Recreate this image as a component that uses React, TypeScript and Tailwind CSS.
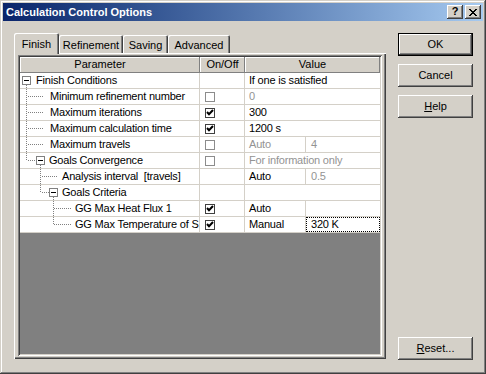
import React from "react";

const RAISED =
  "shadow-[inset_-1px_-1px_#404040,inset_1px_1px_#ffffff,inset_-2px_-2px_#808080,inset_2px_2px_#d4d0c8]";

type Guide = {
  w: number;
  v: [number, number, number][];
  h: [number, number, number][];
  box?: [number, number];
};

type RowT = {
  label: string;
  guide: Guide;
  check: boolean | null;
  value: string;
  valueGray?: boolean;
  sub?: string;
  subGray?: boolean;
  focus?: boolean;
};

const rows: RowT[] = [
  {
    label: "Finish Conditions",
    guide: { w: 16, v: [[6, 12, 15]], h: [], box: [2, 3] },
    check: null,
    value: "If one is satisfied",
  },
  {
    label: "Minimum refinement number",
    guide: { w: 30, v: [[6, 0, 15]], h: [[7, 8, 22]] },
    check: false,
    value: "0",
    valueGray: true,
  },
  {
    label: "Maximum iterations",
    guide: { w: 30, v: [[6, 0, 15]], h: [[7, 8, 22]] },
    check: true,
    value: "300",
  },
  {
    label: "Maximum calculation time",
    guide: { w: 30, v: [[6, 0, 15]], h: [[7, 8, 22]] },
    check: true,
    value: "1200 s",
  },
  {
    label: "Maximum travels",
    guide: { w: 30, v: [[6, 0, 15]], h: [[7, 8, 22]] },
    check: false,
    value: "Auto",
    valueGray: true,
    sub: "4",
    subGray: true,
  },
  {
    label: "Goals Convergence",
    guide: {
      w: 29,
      v: [
        [6, 0, 7],
        [20, 12, 15],
      ],
      h: [[7, 8, 16]],
      box: [16, 3],
    },
    check: false,
    value: "For information only",
    valueGray: true,
  },
  {
    label: "Analysis interval  [travels]",
    guide: { w: 42, v: [[20, 0, 15]], h: [[7, 22, 36]] },
    check: null,
    value: "Auto",
    sub: "0.5",
    subGray: true,
  },
  {
    label: "Goals Criteria",
    guide: {
      w: 42,
      v: [
        [20, 0, 7],
        [33, 12, 15],
      ],
      h: [[7, 22, 29]],
      box: [29, 3],
    },
    check: null,
    value: "",
  },
  {
    label: "GG Max Heat Flux 1",
    guide: { w: 55, v: [[33, 0, 15]], h: [[7, 34, 50]] },
    check: true,
    value: "Auto",
    sub: "",
  },
  {
    label: "GG Max Temperature of S",
    guide: { w: 55, v: [[33, 0, 7]], h: [[7, 34, 50]] },
    check: true,
    value: "Manual",
    sub: "320 K",
    focus: true,
  },
];

function TreeGuide({ g }: { g: Guide }) {
  const els: React.ReactNode[] = [];
  g.v.forEach(([x, y1, y2], i) => {
    for (let y = y1; y <= y2; y++) {
      if (y % 2 === 0) els.push(<rect key={`v${i}-${y}`} x={x} y={y} width={1} height={1} fill="#808080" />);
    }
  });
  g.h.forEach(([y, x1, x2], i) => {
    for (let x = x1; x <= x2; x++) {
      if (x % 2 === 0) els.push(<rect key={`h${i}-${x}`} x={x} y={y} width={1} height={1} fill="#808080" />);
    }
  });
  if (g.box) {
    const [bx, by] = g.box;
    els.push(
      <rect key="box" x={bx + 0.5} y={by + 0.5} width={8} height={8} fill="#ffffff" stroke="#808080" strokeWidth={1} />
    );
    els.push(<rect key="minus" x={bx + 2} y={by + 4} width={5} height={1} fill="#000000" />);
  }
  return (
    <svg width={g.w} height={15} className="flex-none" shapeRendering="crispEdges">
      {els}
    </svg>
  );
}

function CheckBox({ checked }: { checked: boolean }) {
  return (
    <div
      className={`w-[10px] h-[10px] bg-white border flex items-center justify-center ${
        checked ? "border-[#404040]" : "border-[#8c8c8c]"
      }`}
    >
      {checked && (
        <svg width={8} height={8} viewBox="0 0 8 8">
          <path d="M1 3 L3 5.2 L7 1" fill="none" stroke="#000" strokeWidth={2} />
        </svg>
      )}
    </div>
  );
}

function DataRow({ r }: { r: RowT }) {
  const gray = "text-[#939393]";
  return (
    <div className="flex h-[16px] bg-white text-[11px] leading-[15px] tracking-[-0.2px]">
      <div className="w-[180px] flex-none flex items-start overflow-hidden border-b border-r border-[#d4d0c8] whitespace-pre">
        <TreeGuide g={r.guide} />
        <span className="text-black">{r.label}</span>
      </div>
      <div className="w-[45px] flex-none border-b border-r border-[#d4d0c8] flex items-center pl-[5px]">
        {r.check !== null && <CheckBox checked={r.check} />}
      </div>
      {r.sub === undefined ? (
        <div className={`flex-1 border-b border-[#d4d0c8] pl-[4px] ${r.valueGray ? gray : "text-black"}`}>{r.value}</div>
      ) : (
        <div className="flex-1 flex border-b border-[#d4d0c8]">
          <div className={`w-[61px] flex-none border-r border-[#d4d0c8] pl-[4px] ${r.valueGray ? gray : "text-black"}`}>
            {r.value}
          </div>
          {r.focus ? (
            <div className="flex-1 border border-dotted border-black pl-[4px] leading-[13px] text-black">{r.sub}</div>
          ) : (
            <div className={`flex-1 pl-[5px] ${r.subGray ? gray : "text-black"}`}>{r.sub}</div>
          )}
        </div>
      )}
    </div>
  );
}

function Btn({ children, def }: { children: React.ReactNode; def?: boolean }) {
  if (def) {
    return (
      <div className="w-[75px] h-[23px] border border-black bg-[#d4d0c8]">
        <div className="w-full h-full flex items-center justify-center shadow-[inset_-1px_-1px_#404040,inset_1px_1px_#ffffff,inset_-2px_-2px_#808080] text-[11px] text-black">
          {children}
        </div>
      </div>
    );
  }
  return (
    <div className={`w-[75px] h-[23px] bg-[#d4d0c8] flex items-center justify-center text-[11px] text-black ${RAISED}`}>
      {children}
    </div>
  );
}

function Tab({ label, w, sel }: { label: string; w: number; sel?: boolean }) {
  return (
    <div
      style={{ width: w }}
      className={
        sel
          ? "relative z-10 h-[21px] -mb-px bg-[#d4d0c8] rounded-t-[2px] flex justify-center pt-[3px] text-[11px] text-black shadow-[inset_1px_1px_#ffffff,inset_-1px_0_#404040,inset_-2px_0_#808080]"
          : "h-[18px] bg-[#d4d0c8] rounded-t-[2px] flex justify-center pt-[2px] text-[11px] text-black shadow-[inset_1px_1px_#ffffff,inset_-1px_0_#404040,inset_-2px_0_#808080]"
      }
    >
      {label}
    </div>
  );
}

export default function App() {
  return (
    <div className="w-[486px] h-[374px] bg-[#d4d0c8] p-[3px] flex flex-col font-['Liberation_Sans',Arial,sans-serif] shadow-[inset_-1px_-1px_#404040,inset_1px_1px_#d4d0c8,inset_-2px_-2px_#808080,inset_2px_2px_#ffffff]">
      {/* Title bar */}
      <div className="h-[18px] flex items-center bg-gradient-to-r from-[#0a246a] to-[#a6caf0] pl-[3px] pr-[2px]">
        <span className="text-white font-bold text-[11px] flex-1">Calculation Control Options</span>
        <div className={`w-[16px] h-[14px] bg-[#d4d0c8] flex items-center justify-center ${RAISED}`}>
          <span className="text-black font-bold text-[11px] leading-none -mt-px">?</span>
        </div>
        <div className={`w-[16px] h-[14px] ml-[2px] bg-[#d4d0c8] flex items-center justify-center ${RAISED}`}>
          <svg width={8} height={7} viewBox="0 0 8 7" shapeRendering="crispEdges">
            <path d="M0 0h2v1h-2zM6 0h2v1h-2zM1 1h2v1h-2zM5 1h2v1h-2zM2 2h4v1h-4zM3 3h2v1h-2zM2 4h4v1h-4zM1 5h2v1h-2zM5 5h2v1h-2zM0 6h2v1h-2zM6 6h2v1h-2z" fill="#000" />
          </svg>
        </div>
      </div>

      {/* Body */}
      <div className="flex flex-1 pl-[11px] pt-[12px]">
        <div className="w-[372px] flex flex-col">
          <div className="flex items-end h-[20px]">
            <Tab label="Finish" w={45} sel />
            <Tab label="Refinement" w={64} />
            <Tab label="Saving" w={45} />
            <Tab label="Advanced" w={62} />
          </div>
          <div className="h-[306px] flex flex-col pt-[2px] px-[4px] pb-[3px] shadow-[inset_1px_1px_#ffffff,inset_-1px_-1px_#404040,inset_-2px_-2px_#808080]">
            <div className="flex-1 flex flex-col p-[2px] shadow-[inset_1px_1px_#808080,inset_-1px_-1px_#ffffff,inset_2px_2px_#404040,inset_-2px_-2px_#d4d0c8]">
              {/* header */}
              <div className="flex h-[16px] text-[11px] text-black leading-[15px]">
                <div className="w-[180px] flex-none flex justify-center pr-[20px] bg-[#d4d0c8] shadow-[inset_-1px_-1px_#808080,inset_1px_1px_#ffffff]">
                  Parameter
                </div>
                <div className="w-[45px] flex-none flex justify-center bg-[#d4d0c8] shadow-[inset_-1px_-1px_#808080,inset_1px_1px_#ffffff]">
                  On/Off
                </div>
                <div className="flex-1 flex justify-center bg-[#d4d0c8] shadow-[inset_-1px_-1px_#808080,inset_1px_1px_#ffffff]">
                  Value
                </div>
              </div>
              {rows.map((r, i) => (
                <DataRow key={i} r={r} />
              ))}
              <div className="flex-1 bg-[#808080]" />
            </div>
          </div>
        </div>
        <div className="ml-[12px] flex flex-col">
          <Btn def>OK</Btn>
          <div className="mt-[8px]">
            <Btn>Cancel</Btn>
          </div>
          <div className="mt-[8px]">
            <Btn>
              <span className="underline underline-offset-1">H</span>elp
            </Btn>
          </div>
          <div className="mt-[219px]">
            <Btn>
              <span className="underline underline-offset-1">R</span>eset...
            </Btn>
          </div>
        </div>
      </div>
    </div>
  );
}
